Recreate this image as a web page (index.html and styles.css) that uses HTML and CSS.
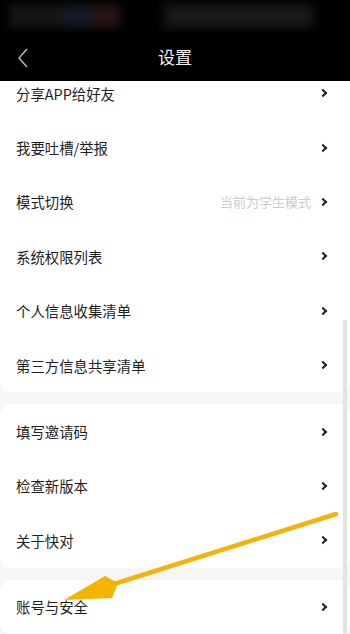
FILE: index.html
```html
<!DOCTYPE html>
<html lang="zh-CN">
<head>
    <meta charset="UTF-8">
    <meta name="viewport" content="width=device-width, initial-scale=1.0">
    <title>设置</title>
    <link rel="stylesheet" href="styles.css">
</head>
<body>
    <div class="screen">
        <div class="status-bar">
            <div class="blur blur-left">
                <span class="tint tint-blue"></span>
                <span class="tint tint-red"></span>
            </div>
            <div class="blur blur-right"></div>
        </div>

        <div class="nav-bar">
            <svg class="back" width="12" height="20" viewBox="0 0 12 20">
                <path d="M10 1 L2 10 L10 19" fill="none" stroke="#bdbdbd" stroke-width="1.4"/>
            </svg>
            <h1>设置</h1>
        </div>

        <div class="content">
            <div class="list">
                <div class="card">
                    <div class="row"><span class="label">分享APP给好友</span><span class="chevron"></span></div>
                    <div class="row"><span class="label">我要吐槽/举报</span><span class="chevron"></span></div>
                    <div class="row"><span class="label">模式切换</span><span class="hint">当前为学生模式</span><span class="chevron"></span></div>
                    <div class="row"><span class="label">系统权限列表</span><span class="chevron"></span></div>
                    <div class="row"><span class="label">个人信息收集清单</span><span class="chevron"></span></div>
                    <div class="row"><span class="label">第三方信息共享清单</span><span class="chevron"></span></div>
                </div>
                <div class="card">
                    <div class="row"><span class="label">填写邀请码</span><span class="chevron"></span></div>
                    <div class="row"><span class="label">检查新版本</span><span class="chevron"></span></div>
                    <div class="row"><span class="label">关于快对</span><span class="chevron"></span></div>
                </div>
                <div class="card">
                    <div class="row"><span class="label">账号与安全</span><span class="chevron"></span></div>
                </div>
            </div>
            <div class="scrollbar"></div>
        </div>

        <!-- annotation arrow drawn over the screenshot -->
        <svg class="arrow" width="350" height="634" viewBox="0 0 350 634">
            <line x1="336" y1="514" x2="114" y2="584" stroke="#f2b40a" stroke-width="4.5" stroke-linecap="round"/>
            <path d="M64 600 L105 576 L118 583 L112 598 Z" fill="#f4b400"/>
        </svg>
    </div>
</body>
</html>
```

FILE: styles.css
```css
* {
    box-sizing: border-box;
}

body {
    margin: 0;
    font-family: "Noto Sans CJK SC", "Noto Sans", sans-serif;
    background: #000;
}

.screen {
    position: relative;
    width: 350px;
    height: 634px;
    overflow: hidden;
    display: flex;
    flex-direction: column;
    background: #f6f6f6;
}

.status-bar {
    height: 32px;
    background: #000;
    display: flex;
    align-items: center;
    overflow: hidden;
    flex-shrink: 0;
}

.blur {
    height: 24px;
    background: #151515;
    filter: blur(5px);
    position: relative;
}

.blur-left {
    width: 110px;
    margin-left: 9px;
}

.blur-right {
    width: 150px;
    margin-left: 45px;
    background: #181818;
}

.tint {
    position: absolute;
    top: 2px;
    width: 30px;
    height: 20px;
    border-radius: 50%;
}

.tint-blue {
    left: 55px;
    background: #141a2a;
}

.tint-red {
    left: 82px;
    background: #2a1412;
}

.nav-bar {
    height: 49px;
    background: #000;
    display: flex;
    align-items: center;
    justify-content: center;
    position: relative;
    flex-shrink: 0;
}

.back {
    position: absolute;
    left: 17px;
    top: 16px;
}

.nav-bar h1 {
    margin: 0;
    color: #f2f2f2;
    font-size: 17px;
    font-weight: 400;
    line-height: 1;
}

.content {
    flex: 1;
    position: relative;
    overflow: hidden;
}

.list {
    margin-top: -15px;
    display: flex;
    flex-direction: column;
    gap: 12px;
}

.card {
    background: #fff;
    border-radius: 10px;
}

.row {
    height: 54.4px;
    display: flex;
    align-items: center;
    padding: 0 22px 0 16px;
}

.label {
    flex: 1;
    font-size: 14.4px;
    color: #1e1e1e;
}

.hint {
    font-size: 13px;
    color: #cccccc;
    margin-right: 9px;
}

.chevron {
    width: 6px;
    height: 6px;
    border-top: 2px solid #222;
    border-right: 2px solid #222;
    transform: rotate(45deg);
    margin-right: 2px;
}

.scrollbar {
    position: absolute;
    right: 3px;
    top: 239px;
    bottom: 0;
    width: 4px;
    border-radius: 2px;
    background: #e2e2e2;
}

.arrow {
    position: absolute;
    left: 0;
    top: 0;
    pointer-events: none;
}
```
